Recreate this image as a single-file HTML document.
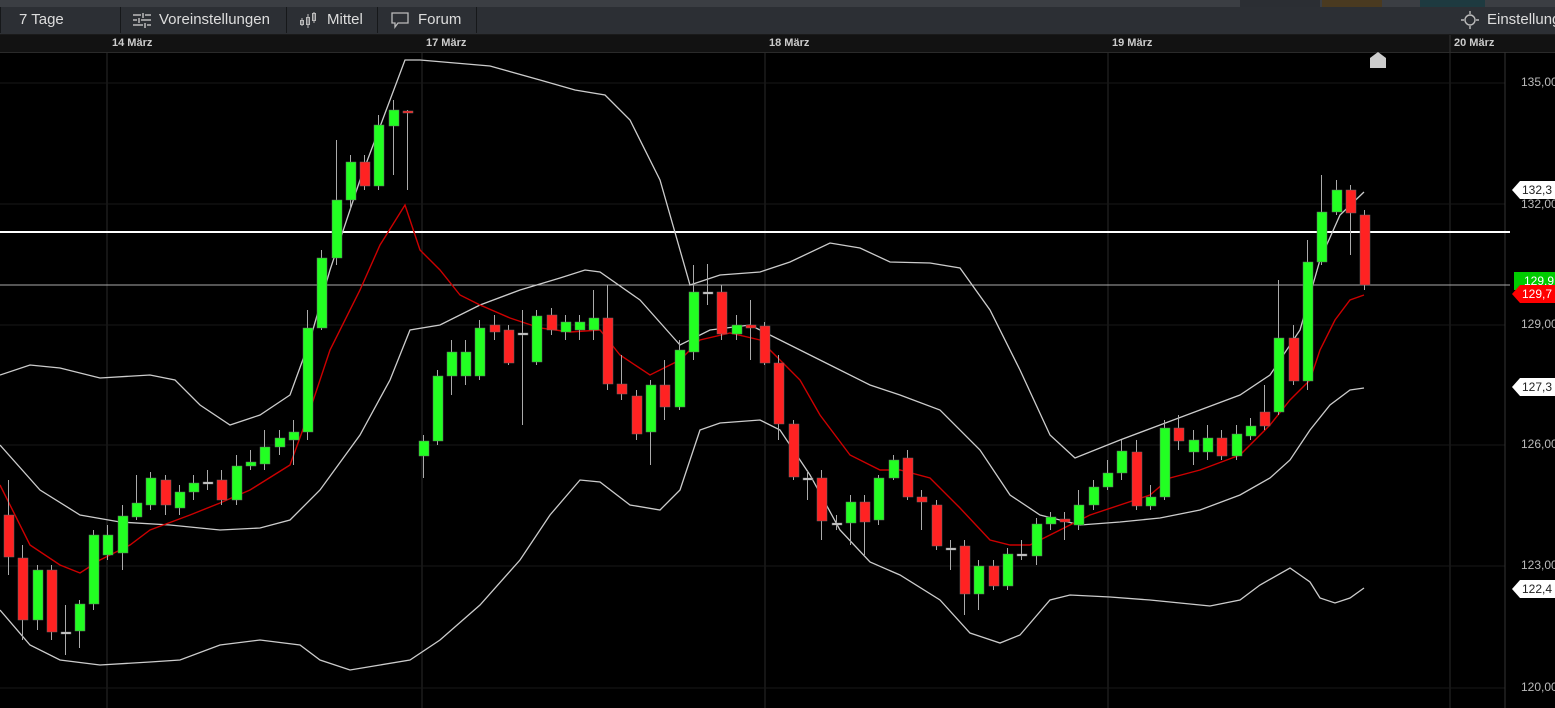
<!DOCTYPE html>
<html><head><meta charset="utf-8"><style>
body{margin:0;width:1555px;height:708px;overflow:hidden;background:#000;font-family:"Liberation Sans",sans-serif;position:relative}
#top{position:absolute;left:0;top:0;width:1555px;height:7px;background:#3b3e43}
#tb{position:absolute;left:0;top:7px;width:1555px;height:27px;background:#2c2f34;border-bottom:1px solid #1a1a1a}
.b{position:absolute;top:0;height:26px;line-height:26px;color:#ddd;font-size:15px;border-right:1px solid #16181a;box-sizing:border-box}
#ax{position:absolute;left:0;top:35px;width:1555px;height:17px;background:#121212;border-bottom:1px solid #2a2a2a}
.d{position:absolute;top:2px;font-size:11px;font-weight:bold;color:#ccc}
svg{position:absolute;left:0;top:0}
.pl{position:absolute;left:1521px;font-size:12px;color:#bbb}
.tag{position:absolute;left:1512px;height:18px;line-height:18px;font-size:12px;padding-left:10px;width:40px;clip-path:polygon(8px 0,100% 0,100% 100%,8px 100%,0 50%)}
</style></head><body>
<div id="top"><div style="position:absolute;left:1240px;top:0;width:80px;height:7px;background:#2b2e33"></div><div style="position:absolute;left:1322px;top:0;width:60px;height:7px;background:#4a3a20"></div><div style="position:absolute;left:1420px;top:0;width:65px;height:7px;background:#1e3a40"></div></div>
<div id="tb">
<div class="b" style="left:0;width:121px;padding-left:18px;border-left:1px solid #16181a">7 Tage</div>
<div class="b" style="left:121px;width:166px;padding-left:38px"><svg width="22" height="16" style="left:10px;top:5px" stroke="#bbb" stroke-width="1.5"><path d="M2 3H10M14 3H20M12 1V6M2 8H6M10 8H20M8 6V11M2 13H12M16 13H20M14 11V16"/></svg>Voreinstellungen</div>
<div class="b" style="left:287px;width:91px;padding-left:40px"><svg width="22" height="18" style="left:12px;top:4px" stroke="#bbb" stroke-width="1" fill="none"><path d="M3 7V15M1.5 9.5h3v4h-3zM9 3V17M7.5 6.5h3v7h-3zM15 1V12M13.5 2.5h3v7h-3z"/></svg>Mittel</div>
<div class="b" style="left:378px;width:99px;padding-left:40px"><svg width="22" height="18" style="left:12px;top:4px" stroke="#bbb" stroke-width="1.3" fill="none"><path d="M2 2H18V12H8L5 16V12H2Z"/></svg>Forum</div>
<div class="b" style="left:1440px;width:115px;padding-left:47px;border:none"><svg width="20" height="20" style="left:20px;top:3px" stroke="#bbb" stroke-width="1.4" fill="none"><circle cx="10" cy="10" r="5"/><path d="M10 1V4M10 16V19M1 10H4M16 10H19"/></svg>Einstellungen</div>
</div>
<div id="ax"><span class="d" style="left:112px">14 März</span><span class="d" style="left:426px">17 März</span><span class="d" style="left:769px">18 März</span><span class="d" style="left:1112px">19 März</span><span class="d" style="left:1454px">20 März</span></div>
<svg id="c" width="1555" height="708"></svg>
<div class="pl" style="top:75px">135,00</div><div class="pl" style="top:317px">129,00</div><div class="pl" style="top:437px">126,00</div><div class="pl" style="top:558px">123,00</div><div class="pl" style="top:680px">120,00</div><div class="pl" style="top:197px">132,00</div>
<div class="tag" style="top:181px;background:#fff;color:#222">132,3</div>
<div class="tag" style="top:272px;background:#0c0;color:#fff;left:1514px;clip-path:none">129,9</div>
<div class="tag" style="top:285px;background:#f00;color:#fff">129,7</div>
<div class="tag" style="top:378px;background:#fff;color:#222">127,3</div>
<div class="tag" style="top:580px;background:#fff;color:#222">122,4</div>
<script>
var s='';
[107,422,765,1108,1450].forEach(function(x){s+='<line x1="'+x+'" y1="52" x2="'+x+'" y2="708" stroke="#2a2a2a"/>';});
[83,204,325,445,566,688].forEach(function(y){s+='<line x1="0" y1="'+y+'" x2="1505" y2="'+y+'" stroke="#181818"/>';});
s+='<line x1="1450" y1="35" x2="1450" y2="52" stroke="#333"/><line x1="1505" y1="52" x2="1505" y2="708" stroke="#333"/>';
s+='<line x1="0" y1="232" x2="1510" y2="232" stroke="#fff" stroke-width="2"/><line x1="0" y1="285" x2="1510" y2="285" stroke="#aaa"/>';
s+='<path d="M1370 68V58L1378 52L1386 58V68Z" fill="#ccc"/>';
function pl(p,c,w){s+='<polyline fill="none" stroke="'+c+'" stroke-width="'+(w||1.3)+'" points="'+p+'"/>';}
pl("0,375 30,365 60,368 100,378 150,375 175,380 200,405 230,425 260,415 290,395 310,340 330,270 360,180 390,100 405,60 420,60 490,66 540,80 575,90 605,95 630,120 660,180 690,285 720,275 760,272 790,262 830,243 860,248 890,262 930,263 960,268 990,310 1020,370 1050,435 1075,458 1120,440 1160,425 1200,410 1240,395 1270,375 1300,330 1320,260 1340,215 1364,192","#ccc");
pl("0,445 40,490 80,515 120,522 170,525 220,530 260,528 290,520 320,490 360,435 390,380 410,330 440,325 480,305 520,290 560,278 585,270 600,272 640,300 680,345 710,330 750,325 790,345 830,365 870,385 900,395 940,410 980,450 1010,495 1040,515 1080,525 1120,522 1160,518 1200,510 1240,495 1270,478 1290,460 1310,430 1330,405 1350,390 1364,388","#ccc");
pl("0,610 30,645 60,660 100,665 150,662 180,660 220,645 260,640 300,645 320,660 350,670 380,665 410,660 440,640 480,605 520,560 550,515 580,480 600,482 630,505 660,510 680,490 700,430 720,423 760,420 780,430 810,475 840,530 870,562 900,575 940,600 970,633 1000,643 1020,635 1050,600 1070,595 1110,597 1150,600 1180,603 1210,606 1240,600 1260,585 1290,568 1310,582 1320,598 1335,603 1350,598 1364,588","#ccc");
pl("0,485 30,545 60,565 80,573 100,560 130,545 150,530 190,515 220,503 250,490 290,465 310,410 330,350 360,290 380,245 405,205 420,250 440,270 460,295 480,305 510,318 540,328 570,332 600,330 620,355 650,375 680,360 700,340 730,333 760,340 780,360 800,380 820,415 850,455 880,470 900,470 930,478 960,508 990,540 1010,545 1030,545 1060,530 1090,515 1120,505 1150,495 1170,478 1200,470 1240,455 1270,425 1290,400 1310,380 1320,350 1335,320 1350,300 1364,295","#c00",1.4);
var d=[[8,'r',515,557,480,575],[22,'r',558,620,545,640],[37,'g',570,620,565,630],[51,'r',570,632,565,640],[65,'w',632,632,605,655],[79,'g',604,631,600,648],[93,'g',535,604,530,610],[107,'g',535,555,525,560],[122,'g',516,553,505,570],[136,'g',503,517,475,520],[150,'g',478,505,472,510],[165,'r',480,505,475,515],[179,'g',492,508,485,515],[193,'g',483,492,475,500],[207,'w',482,482,470,490],[221,'r',480,500,470,505],[236,'g',466,500,455,505],[250,'g',462,466,450,470],[264,'g',447,464,430,470],[279,'g',438,447,430,455],[293,'g',432,440,420,465],[307,'g',328,432,310,440],[321,'g',258,328,250,330],[336,'g',200,258,140,265],[350,'g',162,200,155,210],[364,'r',162,186,155,190],[378,'g',125,186,115,190],[393,'g',110,126,100,175],[407,'r',111,113,110,190],
[423,'g',441,456,435,478],[437,'g',376,441,370,445],[451,'g',352,376,340,395],[465,'g',352,376,340,385],[479,'g',328,376,320,380],[494,'r',325,332,315,340],[508,'r',330,363,325,365],[522,'w',333,333,310,425],[536,'g',316,362,310,365],[551,'r',315,330,308,335],[565,'g',322,332,315,340],[579,'g',322,330,315,340],[593,'g',318,330,290,340],[607,'r',318,384,285,390],[621,'r',384,394,355,400],[636,'r',396,434,390,440],[650,'g',385,432,380,465],[664,'r',385,407,360,420],[679,'g',350,407,340,410],[693,'g',292,352,265,360],[707,'w',292,292,264,305],[721,'r',292,334,285,340],[736,'g',325,334,315,340],[750,'r',325,328,300,360],
[764,'r',326,363,322,365],[778,'r',363,424,355,440],[793,'r',424,477,420,480],[807,'w',478,478,470,500],[821,'r',478,521,470,540],[836,'w',523,523,515,530],[850,'g',502,523,495,545],[864,'r',502,522,495,555],[878,'g',478,520,475,525],[893,'g',460,478,455,480],[907,'r',458,497,450,500],[921,'r',497,502,490,530],[936,'r',505,546,500,550],[950,'w',548,548,540,570],[964,'r',546,594,540,615],[978,'g',566,594,560,610],[993,'r',566,586,560,590],[1007,'g',554,586,548,590],[1021,'w',554,554,540,560],[1036,'g',524,556,518,565],[1050,'g',517,524,512,530],[1064,'r',519,522,512,540],[1078,'g',505,525,490,530],[1093,'g',487,505,480,510],[1107,'g',473,487,460,490],[1121,'g',451,473,440,480],[1136,'r',452,506,440,510],
[1150,'g',497,506,485,510],[1164,'g',428,497,420,500],[1178,'r',428,441,415,450],[1193,'g',440,452,430,465],[1207,'g',438,452,425,460],[1221,'r',438,456,430,460],[1236,'g',434,456,425,460],[1250,'g',426,436,418,440],[1264,'r',412,426,385,430],[1278,'g',338,412,280,415],[1293,'r',338,381,325,385],[1307,'g',262,381,240,390],[1321,'g',212,262,175,265],[1336,'g',190,212,180,215],[1350,'r',190,213,185,255],[1364,'r',215,285,210,290]];
d.forEach(function(c){var col=c[1]=='g'?'#2f2':c[1]=='r'?'#f22':'#ddd';
s+='<line x1="'+(c[0]+.5)+'" y1="'+c[4]+'" x2="'+(c[0]+.5)+'" y2="'+c[5]+'" stroke="#aaa"/>';
var h=Math.max(2,c[3]-c[2]);s+='<rect x="'+(c[0]-4)+'" y="'+c[2]+'" width="10" height="'+h+'" fill="'+col+'" stroke="#666" stroke-width=".5"/>';});
document.getElementById('c').innerHTML=s;
</script>
</body></html>
